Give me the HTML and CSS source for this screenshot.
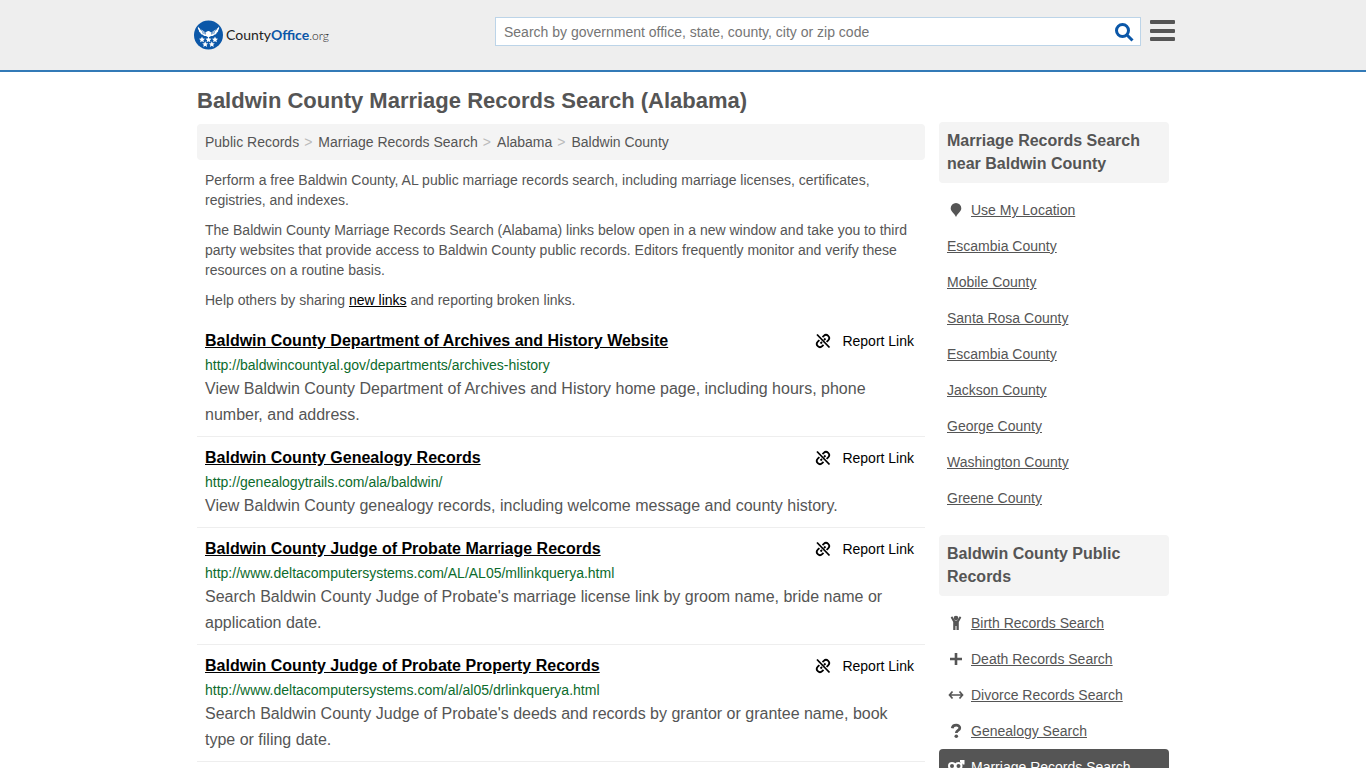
FILE: index.html
```html
<!DOCTYPE html>
<html lang="en">
<head>
    <meta charset="UTF-8">
    <meta name="viewport" content="width=device-width, initial-scale=1.0">
    <title>Baldwin County Marriage Records Search (Alabama)</title>
    <link rel="stylesheet" href="styles.css">
</head>
<body>
    <svg class="sprite" aria-hidden="true">
        <symbol id="unlink" viewBox="0 0 16 16">
            <g fill="none" stroke="currentColor" stroke-width="1.800">
                <path d="M2 1.500l12.500 13"/>
                <path d="M7.500 4.200l1.300-1.300a3.100 3.100 0 0 1 4.400 4.400l-1.600 1.600"/>
                <path d="M8.500 11.800l-1.300 1.300a3.100 3.100 0 0 1-4.400-4.400l1.600-1.600"/>
                <path d="M10.500 5.500L9 7M7 9l-1.500 1.500"/>
            </g>
        </symbol>
    </svg>
    <header class="header">
        <div class="header-inner">
            <a class="logo" href="#">
                <svg class="logo-mark" viewBox="0 0 30 30" aria-hidden="true">
                    <circle cx="14.500" cy="15" r="14.500" fill="#0b57a8"/>
                    <g fill="#fff">
                        <path d="M4 6.500c1.500 3 5 3.500 7.500 6.300l1.300-1.300c1-.8 2.600-.8 3.300.3l1.400 1C20 10 23.500 9.500 25 6.500c.4 1.600 0 2.800-.8 3.700.2 1.200-.5 2-1.500 2.500-.2 1.300-1.200 1.900-2.400 2-.8 1.200-2 1.500-3.200 1.300L14.500 17.500 12 16c-1.200.2-2.400-.1-3.200-1.300-1.200-.1-2.200-.7-2.400-2-1-.5-1.700-1.300-1.500-2.500C4 9.300 3.600 8.100 4 6.500z"/>
                        <path id="star" d="M8 16.600l.9 2 2.100.2-1.600 1.400.5 2.100L8 21.200l-1.900 1.100.5-2.100L5 18.800l2.100-.2z"/>
                        <use href="#star" x="6.500"/>
                        <use href="#star" x="13"/>
                        <use href="#star" x="3.200" y="4.600"/>
                        <use href="#star" x="9.800" y="4.600"/>
                    </g>
                    <path d="M6 9c2 3 4.500 2.500 6 5M8 12.500c1.500 1 2.500.8 3.500 2M23 9c-2 3-4.500 2.500-6 5M21 12.500c-1.500 1-2.500.8-3.500 2" fill="none" stroke="#0b57a8" stroke-width=".6"/>
                </svg>
                <span class="logo-text">County<b>Office</b><i>.org</i></span>
            </a>
            <div class="tools">
                <form class="search">
                    <input class="search-input" type="text" aria-label="Search" placeholder="Search by government office, state, county, city or zip code">
                    <button class="search-btn" type="button" aria-label="Search">
                        <svg viewBox="0 0 20 20" width="20" height="20"><g fill="none" stroke="#0b57a8" stroke-width="3"><circle cx="8.500" cy="8.500" r="6"/><path d="M13 13l5.500 5.500"/></g></svg>
                    </button>
                </form>
                <button class="menu-btn" type="button" aria-label="Menu"><span></span><span></span><span></span></button>
            </div>
        </div>
    </header>

    <div class="container">
        <h1>Baldwin County Marriage Records Search (Alabama)</h1>
        <div class="columns">
            <main class="main">
                <nav class="breadcrumb">
                    <a href="#">Public Records</a><span>&gt;</span><a href="#">Marriage Records Search</a><span>&gt;</span><a href="#">Alabama</a><span>&gt;</span><a href="#">Baldwin County</a>
                </nav>
                <div class="intro">
                    <p>Perform a free Baldwin County, AL public marriage records search, including marriage licenses, certificates, registries, and indexes.</p>
                    <p>The Baldwin County Marriage Records Search (Alabama) links below open in a new window and take you to third party websites that provide access to Baldwin County public records. Editors frequently monitor and verify these resources on a routine basis.</p>
                    <p>Help others by sharing <a href="#">new links</a> and reporting broken links.</p>
                </div>
                <div class="results">
                    <div class="item">
                        <div class="item-head">
                            <a class="item-title" href="#">Baldwin County Department of Archives and History Website</a>
                            <a class="report" href="#"><svg class="report-icon"><use href="#unlink"/></svg>Report Link</a>
                        </div>
                        <div class="url">http://baldwincountyal.gov/departments/archives-history</div>
                        <div class="desc">View Baldwin County Department of Archives and History home page, including hours, phone number, and address.</div>
                    </div>
                    <div class="item">
                        <div class="item-head">
                            <a class="item-title" href="#">Baldwin County Genealogy Records</a>
                            <a class="report" href="#"><svg class="report-icon"><use href="#unlink"/></svg>Report Link</a>
                        </div>
                        <div class="url">http://genealogytrails.com/ala/baldwin/</div>
                        <div class="desc">View Baldwin County genealogy records, including welcome message and county history.</div>
                    </div>
                    <div class="item">
                        <div class="item-head">
                            <a class="item-title" href="#">Baldwin County Judge of Probate Marriage Records</a>
                            <a class="report" href="#"><svg class="report-icon"><use href="#unlink"/></svg>Report Link</a>
                        </div>
                        <div class="url">http://www.deltacomputersystems.com/AL/AL05/mllinkquerya.html</div>
                        <div class="desc">Search Baldwin County Judge of Probate's marriage license link by groom name, bride name or application date.</div>
                    </div>
                    <div class="item">
                        <div class="item-head">
                            <a class="item-title" href="#">Baldwin County Judge of Probate Property Records</a>
                            <a class="report" href="#"><svg class="report-icon"><use href="#unlink"/></svg>Report Link</a>
                        </div>
                        <div class="url">http://www.deltacomputersystems.com/al/al05/drlinkquerya.html</div>
                        <div class="desc">Search Baldwin County Judge of Probate's deeds and records by grantor or grantee name, book type or filing date.</div>
                    </div>
                </div>
            </main>

            <aside class="sidebar">
                <h2>Marriage Records Search near Baldwin County</h2>
                <ul class="links">
                    <li><svg class="icon" viewBox="0 0 18 18"><path fill="currentColor" d="M9 2a5.300 5.300 0 0 0-5.300 5.300c0 3.200 3.800 5 5.300 8.700 1.500-3.700 5.300-5.500 5.300-8.700A5.300 5.300 0 0 0 9 2z"/></svg><a href="#">Use My Location</a></li>
                    <li><a href="#">Escambia County</a></li>
                    <li><a href="#">Mobile County</a></li>
                    <li><a href="#">Santa Rosa County</a></li>
                    <li><a href="#">Escambia County</a></li>
                    <li><a href="#">Jackson County</a></li>
                    <li><a href="#">George County</a></li>
                    <li><a href="#">Washington County</a></li>
                    <li><a href="#">Greene County</a></li>
                </ul>
                <h2>Baldwin County Public Records</h2>
                <ul class="links">
                    <li><svg class="icon" viewBox="0 0 18 18"><g fill="currentColor"><circle cx="9" cy="4" r="2.300"/><path d="M3.700 3.600l1.500-1.300L8 6.500h2l2.800-4.200 1.500 1.300-2.500 4.400v8H9.500v-4h-1v4H6.200V8z"/></g></svg><a href="#">Birth Records Search</a></li>
                    <li><svg class="icon" viewBox="0 0 18 18"><path fill="currentColor" d="M7.700 3h2.600v4.700H15v2.600h-4.700V15H7.700v-4.700H3V7.700h4.700z"/></svg><a href="#">Death Records Search</a></li>
                    <li><svg class="icon" viewBox="0 0 18 18"><path fill="none" stroke="currentColor" stroke-width="1.700" d="M3 9h12M5.500 5.500L2.500 9l3 3.500M12.500 5.500l3 3.500-3 3.500"/></svg><a href="#">Divorce Records Search</a></li>
                    <li><svg class="icon" viewBox="0 0 18 18"><path fill="none" stroke="currentColor" stroke-width="2.700" d="M5.200 6.200C5.800 2.200 12.800 2.200 12.800 5.900c0 2.600-3.500 2.300-3.500 5"/><circle cx="9.300" cy="14.300" r="1.800" fill="currentColor"/></svg><a href="#">Genealogy Search</a></li>
                    <li class="active"><svg class="icon" viewBox="0 0 18 18"><g fill="none" stroke="currentColor" stroke-width="2"><circle cx="5" cy="8" r="3"/><circle cx="11.500" cy="8" r="3"/><path d="M5 11v5M3 14h4M11.500 11v5M9.500 14h4M13.500 6l2.500-2.500M13 3h3.500v3.500"/></g></svg><a href="#">Marriage Records Search</a></li>
                </ul>
            </aside>
        </div>
    </div>
</body>
</html>
```

FILE: styles.css
```css
* {
    box-sizing: border-box;
    margin: 0;
    padding: 0;
}

body {
    font-family: "Liberation Sans", Arial, sans-serif;
    font-size: 14px;
    line-height: 20px;
    color: #555;
    background: #fff;
}

a {
    color: inherit;
}

ul {
    list-style: none;
}

.sprite {
    display: none;
}

/* header */
.header {
    background: #eee;
    border-bottom: 2px solid #337ab7;
}

.header-inner {
    display: flex;
    justify-content: space-between;
    max-width: 984px;
    height: 70px;
    margin: 0 auto;
    padding-left: 3px;
}

.logo {
    display: flex;
    gap: 2px;
    align-items: center;
    color: #222;
    text-decoration: none;
}

.logo-mark {
    width: 30px;
    height: 30px;
}

.logo-text {
    font-family: Lato, sans-serif;
    font-size: 14px;
}

.logo-text b {
    color: #0b57a8;
}

.logo-text i {
    font-size: 12px;
    font-style: normal;
    font-weight: 300;
}

.tools {
    display: flex;
    gap: 9px;
    width: 680px;
    padding-top: 17px;
}

.search {
    display: flex;
    flex: 1;
    height: 29px;
    background: #fff;
    border: 1px solid #bcd4e8;
}

.search-input {
    flex: 1;
    padding: 0 8px;
    border: 0;
    font: inherit;
    color: #555;
    background: none;
}

.search-input::placeholder {
    color: #757575;
}

.search-btn {
    display: flex;
    align-items: center;
    justify-content: center;
    width: 32px;
    border: 0;
    background: none;
}

.menu-btn {
    display: flex;
    flex-direction: column;
    justify-content: space-between;
    width: 25px;
    height: 21px;
    margin-top: 3px;
    border: 0;
    background: none;
}

.menu-btn span {
    width: 25px;
    height: 4px;
    background: #555;
    border-radius: 1px;
}

/* content */
.container {
    max-width: 972px;
    margin: 0 auto;
    padding-top: 15px;
}

h1 {
    font-size: 22px;
    line-height: 28px;
}

.columns {
    display: flex;
    gap: 14px;
    padding-top: 7px;
}

.main {
    flex: 1;
    padding-top: 2px;
}

.breadcrumb {
    padding: 8px;
    background: #f4f4f4;
    border-radius: 4px;
}

.breadcrumb a {
    text-decoration: none;
}

.breadcrumb span {
    padding: 0 6px 0 5px;
    color: #bbb;
}

.intro {
    padding: 0 8px;
}

.intro p {
    margin: 10px 0;
}

.intro a {
    color: #000;
}

.item {
    padding: 9px 8px 8px;
    border-bottom: 1px solid #eee;
}

.item-head {
    display: flex;
    justify-content: space-between;
    margin-bottom: 2px;
    line-height: 24px;
}

.item-title {
    font-size: 16px;
    font-weight: bold;
    color: #000;
}

.report {
    display: flex;
    align-items: center;
    gap: 11px;
    padding-right: 3px;
    color: #000;
    text-decoration: none;
}

.report-icon {
    width: 16px;
    height: 16px;
}

.url {
    margin-bottom: 1px;
    color: #0c6b2c;
}

.desc {
    font-size: 16px;
    line-height: 26px;
}

/* sidebar */
.sidebar {
    width: 230px;
}

.sidebar h2 {
    padding: 7px 8px 8px;
    font-size: 16px;
    line-height: 23px;
    background: #f4f4f4;
    border-radius: 4px;
}

.links {
    margin: 9px 0 19px;
}

.links li {
    display: flex;
    align-items: center;
    gap: 6px;
    padding: 8px;
    border-radius: 4px;
}

.links .active {
    color: #fff;
    background: #555;
}

.icon {
    width: 18px;
    height: 18px;
}
```
